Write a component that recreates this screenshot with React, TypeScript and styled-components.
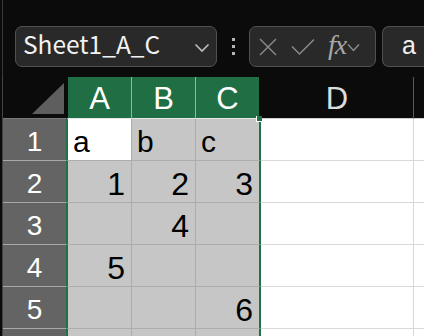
import styled, { createGlobalStyle } from "styled-components";

const GlobalStyle = createGlobalStyle`
  html, body {
    margin: 0;
    padding: 0;
    background: #0b0b0b;
    overflow: hidden;
  }
`;

type CellValue = string | number | "";

// each row: values for columns A, B, C
const rows: CellValue[][] = [
  ["a", "b", "c"],
  [1, 2, 3],
  ["", 4, ""],
  [5, "", ""],
  ["", "", 6],
];

const colWidths = [66, 64, 65, 153];

function App(): JSX.Element {
  return (
    <>
      <GlobalStyle />
      <Window>
        <Toolbar>
          <NameBox>
            <NameText>Sheet1_A_C</NameText>
            <Chevron width="16" height="10" viewBox="0 0 16 10">
              <polyline points="1.5,1.5 8,8 14.5,1.5" />
            </Chevron>
          </NameBox>
          <Dots>
            <span />
            <span />
            <span />
          </Dots>
          <FormulaButtons>
            <IconSvg width="18" height="18" viewBox="0 0 18 18">
              <line x1="1" y1="1" x2="17" y2="17" />
              <line x1="17" y1="1" x2="1" y2="17" />
            </IconSvg>
            <IconSvg width="24" height="18" viewBox="0 0 24 18">
              <polyline points="1,8.5 8.5,16 23,1.5" />
            </IconSvg>
            <Fx>fx</Fx>
            <SmallChevron width="13" height="9" viewBox="0 0 13 9">
              <polyline points="1,1.5 6.5,7.5 12,1.5" />
            </SmallChevron>
          </FormulaButtons>
          <FormulaInput>a</FormulaInput>
        </Toolbar>

        <Sheet>
          <HeaderRow>
            <Corner>
              <Triangle />
            </Corner>
            {["A", "B", "C"].map((c, i) => (
              <ColHeader key={c} $width={colWidths[i]} $selected $first={i === 0} $last={i === 2}>
                {c}
              </ColHeader>
            ))}
            <ColHeader $width={colWidths[3]}>D</ColHeader>
            <ColHeader $width={60} />
            <Handle />
          </HeaderRow>

          {rows.map((r, ri) => (
            <Row key={ri}>
              <RowHeader>{ri + 1}</RowHeader>
              {r.map((v, ci) => (
                <Cell
                  key={ci}
                  $width={colWidths[ci]}
                  $selected
                  $active={ri === 0 && ci === 0}
                  $first={ci === 0}
                  $last={ci === 2}
                  $numeric={typeof v === "number"}
                >
                  {v}
                </Cell>
              ))}
              <Cell $width={colWidths[3]} />
              <Cell $width={60} />
            </Row>
          ))}

          {/* next row, only its top edge is in view */}
          <Row>
            <RowHeader />
            {[0, 1, 2].map((ci) => (
              <Cell key={ci} $width={colWidths[ci]} $selected $first={ci === 0} $last={ci === 2} />
            ))}
            <Cell $width={colWidths[3]} />
            <Cell $width={60} />
          </Row>
        </Sheet>
      </Window>
    </>
  );
}

export default App;

const Window = styled.div`
  width: 424px;
  height: 336px;
  overflow: hidden;
  background: #0b0b0b;
  font-family: "Liberation Sans", Arial, sans-serif;
`;

const Toolbar = styled.div`
  height: 77px;
  box-sizing: border-box;
  padding: 26px 0 0 12px;
  margin-left: 2px;
  display: flex;
  align-items: flex-start;
  border-left: 1px solid #3a3a3a;
`;

const Box = styled.div`
  height: 41px;
  box-sizing: border-box;
  background: #292929;
  border: 1px solid #505050;
  border-radius: 7px;
  display: flex;
  align-items: center;
`;

const NameBox = styled(Box)`
  width: 202px;
  padding: 0 6px 0 7px;
  justify-content: space-between;
`;

const NameText = styled.span`
  color: #f2f2f2;
  font-family: "Noto Sans CJK JP", "Liberation Sans", sans-serif;
  font-size: 24.5px;
  line-height: 1;
  margin-top: -4px;
`;

const Chevron = styled.svg`
  fill: none;
  stroke: #bdbdbd;
  stroke-width: 1.6;
  margin-top: 2px;
`;

const Dots = styled.div`
  width: 32px;
  height: 41px;
  display: flex;
  flex-direction: column;
  align-items: center;
  justify-content: center;
  gap: 4px;

  span {
    width: 3px;
    height: 3px;
    background: #b5b5b5;
  }
`;

const FormulaButtons = styled(Box)`
  width: 127px;
  padding: 0 4px 0 9px;
  gap: 14px;
`;

const IconSvg = styled.svg`
  fill: none;
  stroke: #8a8a8a;
  stroke-width: 1.5;
  flex: none;
`;

const Fx = styled.span`
  font-family: "Liberation Serif", "Times New Roman", serif;
  font-style: italic;
  font-size: 28px;
  color: #a8a8a8;
  line-height: 1;
  margin-top: -3px;
  margin-left: -1px;
  letter-spacing: -1px;
`;

const SmallChevron = styled.svg`
  fill: none;
  stroke: #8a8a8a;
  stroke-width: 1.4;
  margin-left: -13px;
  margin-top: 2px;
`;

const FormulaInput = styled(Box)`
  margin-left: 6px;
  flex: 1;
  border-right: none;
  border-top-right-radius: 0;
  border-bottom-right-radius: 0;
  padding-left: 19px;
  color: #f2f2f2;
  font-size: 25px;
  line-height: 1;
  padding-bottom: 3px;
`;

const Sheet = styled.div`
  margin-left: 2px;
  border-left: 1px solid #444;
`;

const HeaderRow = styled.div`
  display: flex;
  height: 42px;
  position: relative;
`;

const Corner = styled.div`
  width: 63px;
  flex: none;
  box-sizing: border-box;
  display: flex;
  align-items: flex-end;
  justify-content: flex-end;
  padding: 0 2px 4px 0;
  border-bottom: 1px solid #7a7a7a;
`;

const Triangle = styled.div`
  width: 32px;
  height: 31px;
  background: #5e5e5e;
  clip-path: polygon(100% 0, 100% 100%, 0 100%);
`;

const ColHeader = styled.div<{ $width: number; $selected?: boolean; $first?: boolean; $last?: boolean }>`
  width: ${(p) => p.$width}px;
  flex: none;
  box-sizing: border-box;
  display: flex;
  justify-content: center;
  align-items: flex-end;
  padding-bottom: 4px;
  font-size: 31px;
  line-height: 1;
  color: ${(p) => (p.$selected ? "#ffffff" : "#dcdcdc")};
  background: ${(p) => (p.$selected ? "#1f6e44" : "transparent")};
  border-right: 1px solid ${(p) => (p.$selected ? "#8fb8a0" : "#5a5a5a")};
  border-bottom: 1px solid ${(p) => (p.$selected ? "#e8e8e8" : "#d0d0d0")};
  ${(p) => p.$first && "border-left: 2px solid #0b0b0b;"}
  ${(p) => p.$last && "border-right: 2px solid #0b0b0b;"}
`;

const Handle = styled.div`
  position: absolute;
  left: 253px;
  top: 39px;
  width: 5px;
  height: 5px;
  background: #1f7246;
  border: 1px solid #ffffff;
  border-top: none;
  border-right: none;
`;

const Row = styled.div`
  display: flex;
  height: 42px;
`;

const RowHeader = styled.div`
  width: 63px;
  flex: none;
  box-sizing: border-box;
  background: #646464;
  border-bottom: 1px solid #a8a8a8;
  color: #ffffff;
  font-size: 28px;
  line-height: 1;
  display: flex;
  justify-content: center;
  align-items: flex-end;
  padding-bottom: 4px;
`;

const Cell = styled.div<{
  $width: number;
  $selected?: boolean;
  $active?: boolean;
  $first?: boolean;
  $last?: boolean;
  $numeric?: boolean;
}>`
  width: ${(p) => p.$width}px;
  flex: none;
  box-sizing: border-box;
  background: ${(p) => (p.$active ? "#ffffff" : p.$selected ? "#c6c6c6" : "#ffffff")};
  border-right: 1px solid ${(p) => (p.$selected ? "#acacac" : "#d9d9d9")};
  border-bottom: 1px solid ${(p) => (p.$selected ? "#acacac" : "#d9d9d9")};
  ${(p) => p.$first && "border-left: 2px solid #1f7246;"}
  ${(p) => p.$last && "border-right: 2px solid #1f7246;"}
  color: #000000;
  display: flex;
  align-items: flex-end;
  justify-content: ${(p) => (p.$numeric ? "flex-end" : "flex-start")};
  padding: ${(p) => (p.$numeric ? "0 6px 2px 0" : "0 0 3px 5px")};
  font-size: ${(p) => (p.$numeric ? 32 : 30)}px;
  line-height: 1;
`;
